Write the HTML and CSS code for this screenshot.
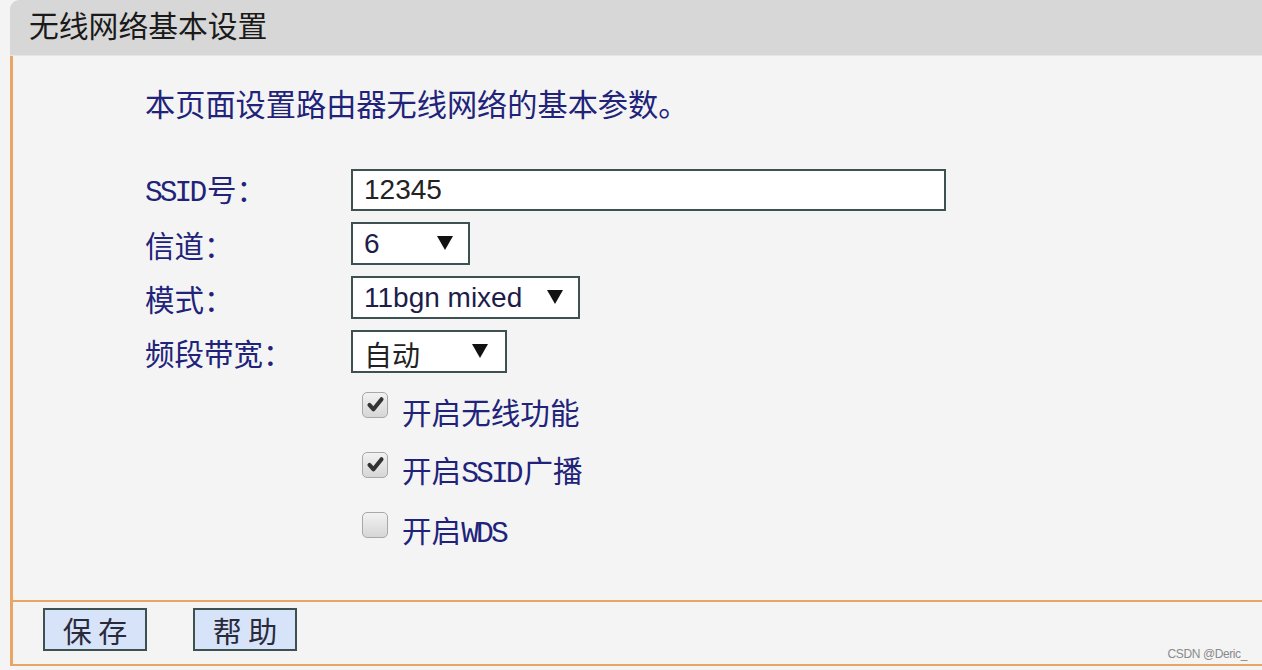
FILE: index.html
```html
<!DOCTYPE html>
<html lang="zh-CN">
<head>
<meta charset="utf-8">
<title>无线网络基本设置</title>
<link rel="stylesheet" href="styles.css">
</head>
<body>
<div class="panel">
  <div class="header">无线网络基本设置</div>
  <div class="content">
    <p class="desc">本页面设置路由器无线网络的基本参数。</p>
    <div class="form">
      <div class="row">
        <span class="label"><span class="lat">SSID</span>号：</span>
        <div class="input">12345</div>
      </div>
      <div class="row">
        <span class="label">信道：</span>
        <div class="select w1"><span>6</span><span class="arrow"></span></div>
      </div>
      <div class="row">
        <span class="label">模式：</span>
        <div class="select w2"><span>11bgn mixed</span><span class="arrow"></span></div>
      </div>
      <div class="row">
        <span class="label">频段带宽：</span>
        <div class="select w3"><span class="cjk">自动</span><span class="arrow"></span></div>
      </div>
    </div>
    <div class="checks">
      <div class="check"><span class="box"><svg viewBox="0 0 26 26"><path d="M5.5 13.5 L10.5 19 L20.5 6.5" fill="none" stroke="#333" stroke-width="5" stroke-linecap="round" stroke-linejoin="round"/></svg></span><span class="ctext">开启无线功能</span></div>
      <div class="check"><span class="box"><svg viewBox="0 0 26 26"><path d="M5.5 13.5 L10.5 19 L20.5 6.5" fill="none" stroke="#333" stroke-width="5" stroke-linecap="round" stroke-linejoin="round"/></svg></span><span class="ctext">开启<span class="lat">SSID</span>广播</span></div>
      <div class="check"><span class="box"></span><span class="ctext">开启<span class="lat">WDS</span></span></div>
    </div>
  </div>
  <div class="footer">
    <button class="btn">保 存</button>
    <button class="btn">帮 助</button>
  </div>
</div>
<div class="watermark">CSDN @Deric_</div>
</body>
</html>
```
FILE: styles.css
```css
html, body {
  margin: 0;
  padding: 0;
  background: #f4f4f4;
  width: 1262px;
  height: 670px;
  overflow: hidden;
  font-family: "Noto Sans CJK SC", sans-serif;
}

.panel {
  margin-left: 10px;
}

.header {
  height: 55px;
  background: #d7d7d7;
  border-top-left-radius: 9px;
  border-bottom: 1px solid #e6e6e6;
  padding-left: 19px;
  font-size: 29.8px;
  line-height: 48px;
  color: #1a1a1a;
}

.content {
  height: 544px;
  border-left: 3px solid #e8a566;
  padding-left: 132px;
  box-sizing: border-box;
  padding-top: 26px;
  color: #21237a;
}

.desc {
  margin: 0;
  font-size: 30.2px;
  line-height: 42px;
}

.lat {
  font-family: "Liberation Mono", monospace;
  letter-spacing: -2.9px;
  margin-right: 2.9px;
}

.form {
  margin-top: 45px;
  display: flex;
  flex-direction: column;
  gap: 11px;
}

.row {
  display: flex;
  align-items: center;
  height: 43px;
}

.row:first-child {
  height: 42px;
}

.label {
  width: 206px;
  font-size: 29.5px;
  line-height: 40px;
}

.input {
  width: 595px;
  height: 42px;
  box-sizing: border-box;
  border: 2px solid #3d5151;
  background: #fff;
  font-family: "Liberation Sans", Arial, sans-serif;
  font-size: 28px;
  line-height: 38px;
  color: #222;
  padding-left: 11px;
}

.select {
  height: 43px;
  box-sizing: border-box;
  border: 2px solid #3d5151;
  background: #fff;
  display: flex;
  align-items: center;
  justify-content: space-between;
  padding: 0 15px 0 11px;
  font-family: "Liberation Sans", Arial, sans-serif;
  font-size: 28px;
  color: #1d1d4a;
}

.select .cjk {
  font-family: "Noto Sans CJK SC", sans-serif;
  font-size: 28px;
  color: #222;
  margin-top: 5px;
}

.w1 { width: 119px; }
.w2 { width: 229px; }
.w3 { width: 156px; padding-right: 17px; }

.arrow {
  width: 0;
  height: 0;
  border-left: 8px solid transparent;
  border-right: 8px solid transparent;
  border-top: 14px solid #111;
  margin-bottom: 2px;
}

.checks {
  margin-top: 9px;
  padding-left: 217px;
  display: flex;
  flex-direction: column;
}

.check {
  height: 60px;
  display: flex;
  align-items: center;
}

.box {
  width: 26px;
  height: 26px;
  box-sizing: border-box;
  border: 1.5px solid #a8a8a8;
  border-radius: 5px;
  background: linear-gradient(#f2f2f2, #d6d6d6);
  margin-right: 14px;
  margin-top: -15px;
  display: flex;
  align-items: center;
  justify-content: center;
}

.box svg {
  display: block;
  width: 21px;
  height: 21px;
}

.ctext {
  font-size: 29.6px;
  line-height: 40px;
}

.footer {
  border-left: 3px solid #e8a566;
  border-top: 2px solid #e8a566;
  border-bottom: 2px solid #e8a566;
  box-sizing: border-box;
  height: 66px;
  padding: 6px 0 0 30px;
  display: flex;
  gap: 46px;
  align-items: flex-start;
}

.btn {
  width: 104px;
  height: 43px;
  box-sizing: border-box;
  border: 2px solid #3d5151;
  background: #d7e3f9;
  font-family: "Noto Sans CJK SC", sans-serif;
  font-size: 29px;
  line-height: 36px;
  color: #2a2a3a;
  padding: 0;
  margin: 0;
}

.watermark {
  position: absolute;
  right: 15px;
  bottom: 9px;
  font-family: "Liberation Sans", Arial, sans-serif;
  font-size: 12px;
  letter-spacing: -0.4px;
  color: #8a8a8a;
}
```
